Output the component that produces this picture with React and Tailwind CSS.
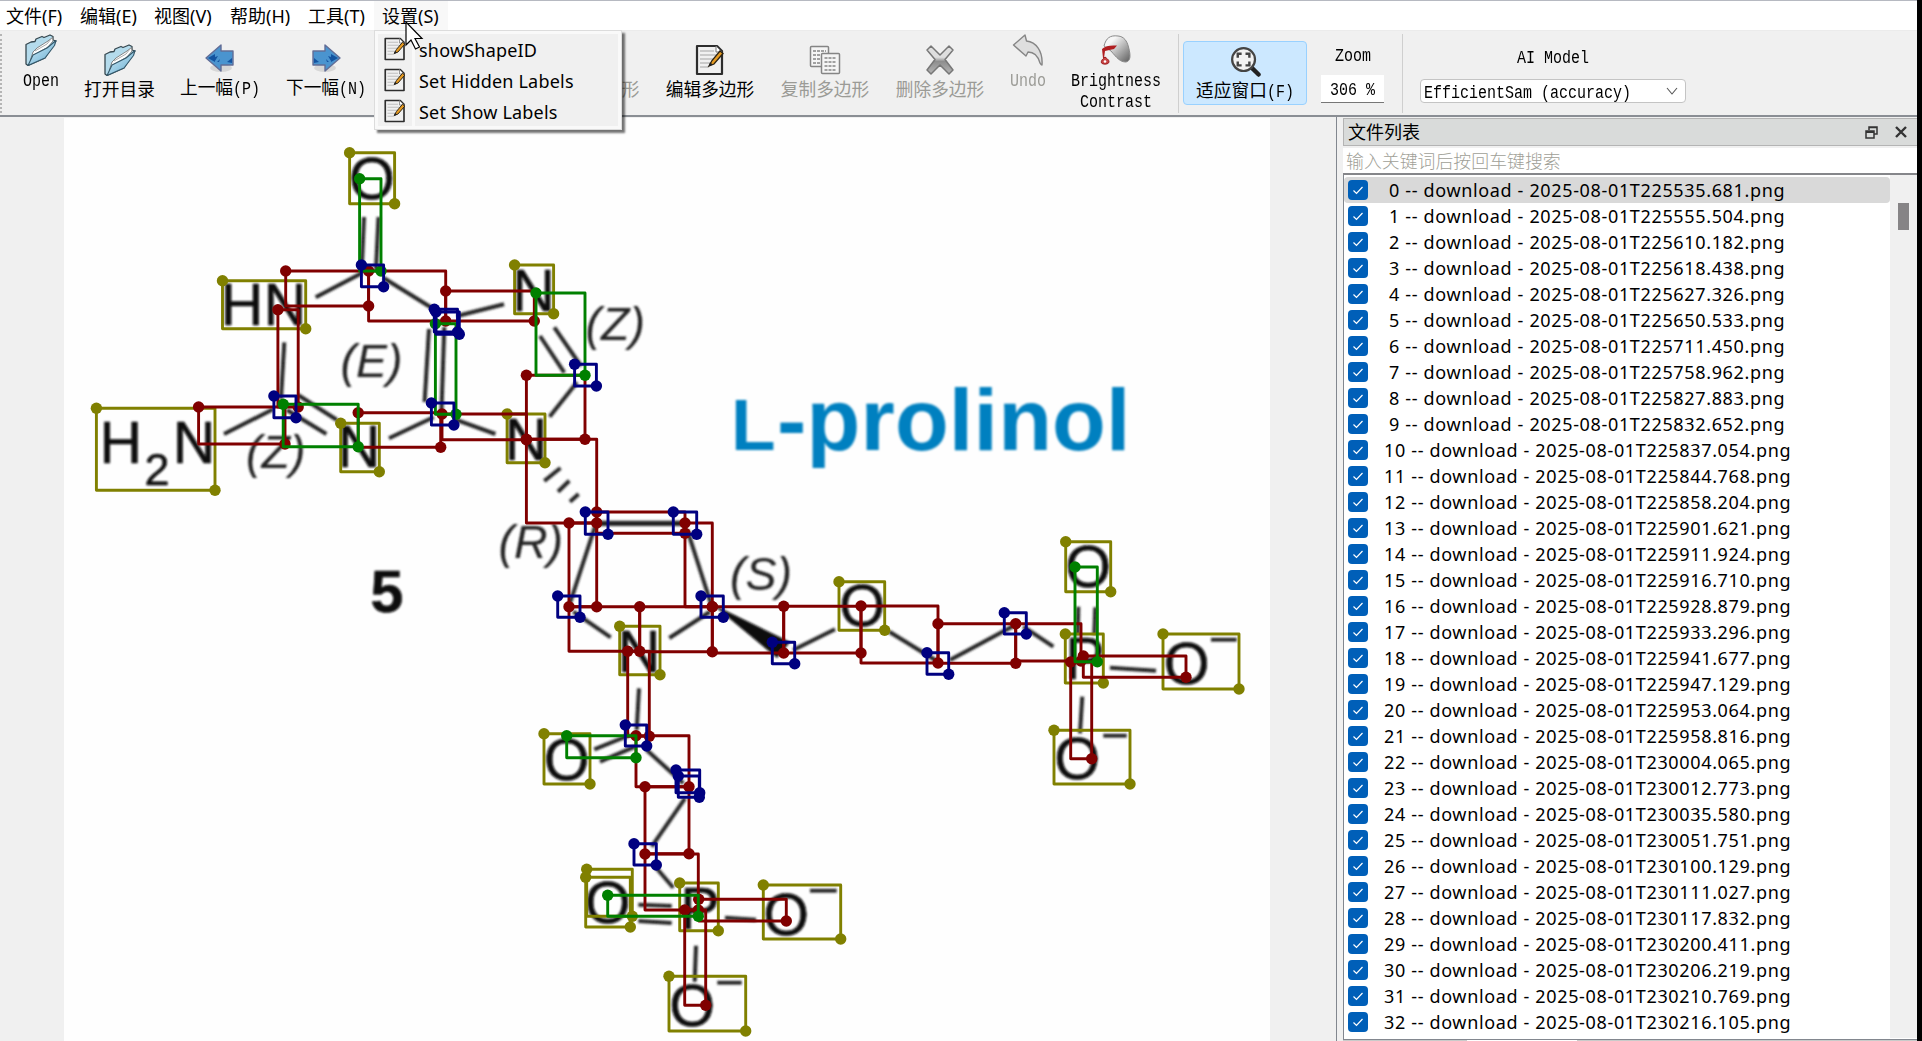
import React from "react";

const OLIVE = "#808000", NAVY = "#000080", GREEN = "#008000", RED = "#800000";

const shapes = [
  [OLIVE, [
    [349.6,152.7,394.6,203.7],[222.5,280.7,305.7,328.7],[514.6,265,553.6,313.7],[96.4,408.3,215,490.3],
    [340.7,423.3,379.3,471.7],[507.1,414,545,462.7],[619.7,626.3,660,674.7],[839,581.7,884.7,630.3],
    [1065.7,541.7,1110.7,591.7],[1065.3,634,1103.3,683],[1163,634,1239,689],[1054,730.3,1130,784],
    [544,733.7,590,784],[586.7,869.3,632.3,916.3],[585.7,877.3,630.3,927],[679.7,883,718.3,930.7],
    [763.3,885,840.7,939],[669,976.3,745.7,1031]]],
  [RED, [
    [285.7,271,368.6,306],[368.6,271,445.7,321],[445.7,291,534.3,321],[277.9,309.7,298.2,407],
    [198.6,407,285,444],[358.2,412.7,440.7,447.3],[442,414,526.4,439.7],[526.4,375.3,585,439.3],
    [526.4,439.3,596.7,523],[569,523,596.7,606.7],[596.7,512,685,533.3],[685,523,712.3,606.7],
    [569,606.7,639.7,651.3],[639.7,606.7,712.3,651.7],[712.3,606.7,783.7,653],[783.7,606.3,861,653],
    [861,606,938,663],[938,623.7,1015.7,663.3],[1015.7,623.7,1081,661],[1083.3,656,1186,677.3],
    [1070.7,662,1091.7,758.7],[627.7,651.3,649.3,736.3],[636,735.7,689,786.7],[645,786.7,689,853.7],
    [645,854,698.3,910],[698.7,899.3,786.3,921],[684.7,910,705.7,1005.3]]],
  [GREEN, [
    [359.6,178.7,381,271],[536,293,585,375.3],[435.4,323.7,456,414.3],[283.2,404.3,358.2,446.7],
    [566.7,735.7,636,757.7],[607.7,895.3,698.3,916.3],[1075,567,1097.3,661.7]]],
  [NAVY, [
    [361.4,265,383.6,286.7],[434.3,309.3,457.5,332],[436,312,459.3,334.3],[273.9,396,296,417.7],
    [431.4,403,453.9,425],[574.6,364.3,596.4,386],[585.3,512,608,534.3],[673.3,512,696.7,534.3],
    [557.7,596,580,617.3],[701,596,723.3,617.3],[772.3,642.3,794.7,663.7],[927,652.7,948.7,674.3],
    [1004.3,612.7,1026.3,634],[625.3,725,646.7,746],[676,770,699.7,792.7],[678.3,776,699.3,797.3],
    [634,843.7,656.3,865]]],
];

const bonds = [
  [364,217,362,263],[378.5,217,376,270],[315.7,297.3,362,273],[383.6,278,433.6,309],[457,316,504,304.3],
  [429,329,424.6,402],[444.3,327,441.4,413],[540,336,564.3,372.7],[554.3,327.3,581,366],[577,382.3,549.6,416.7],
  [284.3,342.3,281,399],[224,434,273,409.3],[298,395,337,420],[287,410,326.4,434],[389,438.3,433.6,417.3],
  [455,419.3,495.4,434],[544.3,481,560.4,468],[558,491.7,569.3,480.7],[570,501.7,578.6,494],
  [595,526.7,570,603],[687.3,530,711.7,606],[573.3,611.7,610.7,637.3],[710,611.7,669.3,638],
  [793.3,650,835,629.3],[889.3,631.7,938,661.7],[950,660,1013.3,626],[1023.3,626.7,1053.3,646.7],
  [1078.3,606.7,1077.7,635],[1095.3,607.3,1094.3,635],[1110,667.7,1156,670.7],[1082.3,696.7,1080,733.3],
  [639,688.3,636.7,730],[594.3,749.3,630,735],[600,761.7,635,746.7],[646.7,750,683.3,783.3],
  [685,798.3,651.7,846.7],[653,864,673.3,887.7],[638.3,904.7,671.7,906],[638.3,921,671.7,923],
  [725,917.7,756,919.7],[696,945.7,694.7,981.7],
];

const oxygens = [[372,178.5],[862.3,605.5],[1088.3,566.8],[1186.7,663.2],[1077.3,758.5],[566.7,759.5],[607.7,902.2],[786.3,914.2],[692.3,1005.8]];
const nitrogens = [[533.6,310.8],[359,467],[526,459.5],[639,671.5],[194,463]];
const charges = [[1211,639.7,1236.7],[1103.3,735.7,1126.7],[810,890.7,836.7],[717.3,982.7,741.7]];
const stereo = [["(E)",340.5,376.5],["(Z)",246,467.5],["(Z)",585.5,340],["(R)",498.5,558],["(S)",730,590]];

function Canvas() {
  return (
    <svg className="block h-[923px] w-[1206px] bg-[#fefefe]" viewBox="64 118 1206 923" fontFamily="'Liberation Sans', Arial, sans-serif">
      <defs><filter id="soft" x="-5%" y="-5%" width="110%" height="110%"><feGaussianBlur stdDeviation="1.05" /></filter></defs>
      <g filter="url(#soft)" fill="#0a0a0a">
        <g stroke="#262626" strokeWidth="4">
          {bonds.map(([a, b, c, d], i) => <line key={i} x1={a} y1={b} x2={c} y2={d} />)}
        </g>
        <line x1="597" y1="523.4" x2="685" y2="523.4" stroke="#222" strokeWidth="5.2" />
        <path d="M712 604 790 642 777 658Z" />
        <g stroke="#222" strokeWidth="3.8">
          {charges.map(([a, y, b], i) => <line key={i} x1={a} y1={y} x2={b} y2={y} />)}
        </g>
        <g fontSize="59" textAnchor="middle" stroke="#0a0a0a" strokeWidth="0.5">
          {oxygens.map(([x, y], i) => <text key={i} x={x} y={y + 20.5}>O</text>)}
          {nitrogens.map(([x, y], i) => <text key={i} x={x} y={y}>N</text>)}
          <text x="263.4" y="324.5">HN</text>
          <text x="120.7" y="462.5">H</text>
          <text x="157" y="484.5" fontSize="45">2</text>
          <text x="1085" y="679">P</text>
          <text x="700" y="928.5">P</text>
          <text x="387" y="611.5" fontWeight="bold">5</text>
        </g>
        <g fontSize="46.5" fontStyle="italic" fill="#222">
          {stereo.map(([t, x, y], i) => <text key={i} x={x} y={y}>{t}</text>)}
        </g>
        <g fill="#0080c0" fontWeight="bold" fontSize="88">
          <text x="731" y="450" fontSize="73">L</text>
          <text x="777" y="450" letterSpacing="0.2">-prolinol</text>
        </g>
      </g>
      {shapes.map(([color, list]) => (
        <g key={color} fill={color} stroke={color}>
          {list.map(([a, b, c, d], i) => (
            <g key={i}>
              <rect x={a} y={b} width={c - a} height={d - b} fill="none" strokeWidth="2.900" strokeLinejoin="round" />
              <circle cx={a} cy={b} r="5.700" stroke="none" />
              <circle cx={c} cy={d} r="5.700" stroke="none" />
            </g>
          ))}
        </g>
      ))}
    </svg>
  );
}

function FolderIcon() {
  return (
    <svg className="h-8 w-8" viewBox="0 0 32 32" strokeLinejoin="round">
      <defs><linearGradient id="folder" x1="0" y1="0" x2="1" y2="1"><stop offset="0" stopColor="#d8eff9" /><stop offset="1" stopColor="#62abd0" /></linearGradient></defs>
      <path d="M1 10.500 6 8l4-.5 1-2.500 6-2.500 2 1L25 1l3 1.500V6l3 1L20 24 3 31.500 1 30Z" fill="#b4dbec" stroke="#36474f" strokeWidth="1.300" />
      <path d="M5.500 26 8 18l4-4 11-7 4.500-3.500L28 7l-5 6-14 8Z" fill="#fff" stroke="#777" strokeWidth=".9" />
      <path d="m10 17 12-7 4-5" fill="none" stroke="#aaa" strokeWidth="1" />
      <path d="M3 31.500 8 21l14-7 9-7.500-1.500 5L20 24Z" fill="url(#folder)" stroke="#34586a" strokeWidth="1.100" />
    </svg>
  );
}

function ArrowIcon({ flip }) {
  return (
    <svg className={flip ? "h-8 w-8 -scale-x-100" : "h-8 w-8"} viewBox="0 0 32 32">
      <ellipse cx="17" cy="26" rx="11" ry="4" fill="#000" opacity=".1" />
      <path d="M2 16 17 3v6h12v14H17v6Z" fill="#4a94cf" stroke="#626d96" strokeWidth="1.400" strokeLinejoin="round" />
      <path d="M4 16 11 12v3l3-1-3 5v1ZM28 16l-5 4 5 1ZM16 17l-3 3 2 0Z" fill="#1353a0" />
    </svg>
  );
}

function EditIcon({ className }) {
  return (
    <svg className={className} viewBox="0 0 32 32">
      <path d="M3 2h20l5 5v23H3Z" fill="#f0f0f0" stroke="#2d2d2d" strokeWidth="2.200" strokeLinejoin="round" />
      <path d="M6 7h14M6 11h16M6 15h14M6 19h11M6 23h9" stroke="#bdbdbd" strokeWidth="1.300" />
      <path d="M22 2v6h6Z" fill="#fff" stroke="#777" />
      <path d="M15 22 18 16.500 26 7l3 2.500L20 20Z" fill="#e69b22" stroke="#2b2212" strokeWidth="1.300" />
      <path d="m14.500 22.500 1.500-4L19 20.500Z" fill="#222" />
    </svg>
  );
}

function CopyIcon() {
  return (
    <svg className="h-8 w-8" viewBox="0 0 32 32" fill="#f5f5f5" stroke="#858585" strokeWidth="1.500">
      <rect x="1.500" y="2.500" width="18" height="20" rx="1" />
      <path d="M4 7h13M4 11h13M4 15h13M4 19h13" strokeDasharray="3 1" />
      <rect x="12.500" y="9.500" width="18" height="20" rx="1" />
      <path d="M15.500 14h12M15.500 18h12M15.500 22h12M15.500 26h12" strokeDasharray="3 1" />
    </svg>
  );
}

function DeleteIcon() {
  return (
    <svg className="h-8 w-8" viewBox="0 0 32 32">
      <defs><linearGradient id="cross" x1="0" y1="0" x2="0" y2="1"><stop offset=".4" stopColor="#dedede" /><stop offset=".55" stopColor="#8e8e8e" /><stop offset="1" stopColor="#b5b5b5" /></linearGradient></defs>
      <path d="m3 6 4-4 9 9 9-9 4 4-8 9.500 8 10.500-4 4-9-9-9 9-4-4 8-10.500Z" fill="url(#cross)" stroke="#777" strokeWidth="1.500" strokeLinejoin="round" />
    </svg>
  );
}

function UndoIcon() {
  return (
    <svg className="h-8 w-8" viewBox="0 0 32 32">
      <path d="M1.500 11 13 1l1.500 6C24 8 31 17 30 31c-1.500 0-1-1-2-2-2-7-6-11-12-11l-2 4Z" fill="#dedede" stroke="#858585" strokeWidth="1.400" strokeLinejoin="round" />
    </svg>
  );
}

function BucketIcon() {
  return (
    <svg className="h-8 w-8" viewBox="0 0 32 32">
      <defs><linearGradient id="bucket" x1="0" y1="0" x2="1" y2="1"><stop offset=".25" stopColor="#f6f6f6" /><stop offset="1" stopColor="#5d5d5d" /></linearGradient></defs>
      <path d="M4 12C6 4 10 1 18 2c6 .5 9 5 10.500 11 2.500 9 2 14-2.500 15-6 0-9-4-15-11Z" fill="url(#bucket)" stroke="#8a8a8a" />
      <path d="M2 15c3-3 8-4 15-3.500l-3 3.500-9 2-1 7H3Z" fill="#b01e20" />
      <path d="M5 23c4 3 4.500 4 3.500 6-1 1.500-6 1.500-7 0-.5-2 0-3 3.500-6Z" fill="#c84444" stroke="#9a1719" />
      <circle cx="5" cy="27.500" r="1.300" fill="#fff" />
    </svg>
  );
}

function FitIcon() {
  return (
    <svg className="h-[31px] w-[31px]" viewBox="0 0 32 32">
      <path d="m21 21 8.500 8.500" stroke="#222" strokeWidth="4.500" strokeLinecap="round" />
      <circle cx="14" cy="14" r="11.800" fill="#f2f2f2" stroke="#444" strokeWidth="2.300" />
      <path d="M8 12V8h4M16 8h4v4M20 16v4h-4M12 20H8v-4" fill="none" stroke="#444" strokeWidth="2.500" />
    </svg>
  );
}

/* Half-width Latin text: each character takes 9px beside 18px CJK glyphs. */
function Half({ children, w }) {
  return (
    <span className={`inline-block whitespace-pre text-left ${w}`}>
      <span className="inline-block origin-left scale-x-[0.833] font-['Liberation_Mono',monospace] text-[18px]">{children}</span>
    </span>
  );
}

function Tool({ box, icon, children, dim }) {
  return (
    <div className={`flex shrink-0 flex-col items-center ${box} ${dim ? "text-[#9b9b96]" : "text-black"}`}>
      {icon}
      <div className="mt-0.5 whitespace-nowrap text-[17.700px] leading-[21px]">{children}</div>
    </div>
  );
}

const menus = [["文件(F)", "w-[74px]"], ["编辑(E)", "w-[74px]"], ["视图(V)", "w-[76px]"], ["帮助(H)", "w-[78px]"], ["工具(T)", "w-[66px]"]];
const times = ["225535.681","225555.504","225610.182","225618.438","225627.326","225650.533","225711.450","225758.962","225827.883","225832.652","225837.054","225844.768","225858.204","225901.621","225911.924","225916.710","225928.879","225933.296","225941.677","225947.129","225953.064","225958.816","230004.065","230012.773","230035.580","230051.751","230100.129","230111.027","230117.832","230200.411","230206.219","230210.769","230216.105"];

function SettingsMenu() {
  return (
    <div className="absolute left-[374px] top-[30px] z-10 flex h-[100px] w-[248px] flex-col border border-[#dcdcdc] bg-[#f9f9f9] p-[3px] shadow-[3px_3px_2px_rgba(0,0,0,0.55)]">
      {["showShapeID", "Set Hidden Labels", "Set Show Labels"].map((t) => (
        <div key={t} className="flex h-[31px] items-center gap-[3px]">
          <div className="flex h-full w-[34px] items-center justify-center bg-[#f0f0f0]"><EditIcon className="h-6 w-6" /></div>
          <div className="flex h-full flex-1 items-center bg-[#f0f0f0] pl-1 pt-0.5 text-[18px] leading-[22px] tracking-[0.2px]">{t}</div>
        </div>
      ))}
    </div>
  );
}

export default function App() {
  return (
    <div className="flex h-[1041px] w-[1922px] overflow-hidden bg-black font-['Noto_Sans','Noto_Sans_CJK_SC',sans-serif] text-black">
      <div className="relative flex w-[1917px] flex-col bg-[#f0f0f0]">
        <nav className="flex h-[31px] shrink-0 items-center border-b border-t border-b-[#ebebeb] border-t-[#b6b9c1] bg-white pl-1.5 text-[18px]">
          {menus.map(([t, w]) => <div key={t} className={`pt-0.5 ${w}`}>{t}</div>)}
          <div className="flex h-full w-[74px] items-center bg-[#f8f8f8] pl-2 pt-0.5">设置(S)</div>
        </nav>

        <div className="flex h-[86px] shrink-0 items-start border-b-2 border-b-[#8a8e94] font-['Noto_Sans_CJK_SC',sans-serif]">
          <div className="mt-[3px] h-[79px] w-0 border-l-2 border-dotted border-[#b5b5b5]" />
          <Tool box="w-[77px] pt-[3px]" icon={<FolderIcon />}><Half w="w-9">Open</Half></Tool>
          <Tool box="w-[81px] pt-[13px]" icon={<FolderIcon />}>打开目录</Tool>
          <Tool box="w-[120px] pt-[11px]" icon={<ArrowIcon />}>上一幅<Half w="w-[27px]">(P)</Half></Tool>
          <Tool box="w-[92px] pt-[11px]" icon={<ArrowIcon flip />}>下一幅<Half w="w-[27px]">(N)</Half></Tool>
          <Tool box="ml-[249px] w-[19px] pt-[45px]" dim>形</Tool>
          <Tool box="ml-[13px] w-[114px] pt-[13px]" icon={<EditIcon className="h-8 w-8" />}>编辑多边形</Tool>
          <Tool box="w-[116px] pt-[13px]" dim icon={<CopyIcon />}>复制多边形</Tool>
          <Tool box="w-[114px] pt-[13px]" dim icon={<DeleteIcon />}>删除多边形</Tool>
          <Tool box="w-[62px] pt-[3px]" dim icon={<UndoIcon />}><Half w="w-9">Undo</Half></Tool>
          <Tool box="w-[114px] pt-[3px]" icon={<BucketIcon />}>
            <div className="flex flex-col items-center">
              <div className="h-[21px]"><Half w="w-[90px]">Brightness</Half></div>
              <div className="h-[21px]"><Half w="w-[72px]">Contrast</Half></div>
            </div>
          </Tool>
          <div className="ml-[5px] mt-[3px] h-[79px] w-px bg-[#cfcfcf]" />
          <Tool box="ml-1 mt-2.5 h-16 w-[124px] rounded-sm border border-[#99d1ff] bg-[#cce8ff] pt-1" icon={<FitIcon />}>适应窗口<Half w="w-[27px]">(F)</Half></Tool>
          <div className="ml-3.5 flex w-[63px] flex-col items-center pt-2.5 text-[18px] leading-[24px]">
            <div className="h-6"><Half w="w-9">Zoom</Half></div>
            <div className="mt-2.5 h-7 w-[63px] border-b border-[#777] bg-white text-center"><Half w="w-[45px]">306 %</Half></div>
          </div>
          <div className="ml-[18px] mt-[3px] h-[79px] w-px bg-[#cfcfcf]" />
          <div className="ml-[17px] flex w-[266px] flex-col items-center pt-3 text-[18px] leading-[24px]">
            <div className="h-6"><Half w="w-[72px]">AI Model</Half></div>
            <div className="mt-3 flex h-6 w-full items-center justify-between rounded-sm border border-[#c4c4c4] bg-white pl-[3px] pr-[7px]">
              <div className="h-[22px] leading-[20px]"><Half w="w-[207px]">EfficientSam (accuracy)</Half></div>
              <svg className="h-3 w-3" viewBox="0 0 12 12"><path d="m1 3 5 6 5-6" fill="none" stroke="#555" strokeWidth="1.100" /></svg>
            </div>
          </div>
        </div>

        <div className="flex h-[924px]">
          <main className="flex w-[1337px] border-r border-r-[#82878f] pl-[64px] pt-px"><Canvas /></main>
          <aside className="ml-1.5 flex w-[574px] flex-col">
            <div className="mt-px flex h-7 shrink-0 items-center border border-r-0 border-[#b4b4b4] bg-[#d9dbda] pl-1 text-[18px]">
              <div className="flex-1">文件列表</div>
              <svg className="mr-[17px] h-[13px] w-[13px]" viewBox="0 0 13 13" fill="none" stroke="#333"><path d="M4 4V1h8v7H9M4 1.500h8" strokeWidth="1.500" /><rect x="1" y="5" width="8" height="7" strokeWidth="1.500" /><path d="M1 6h8" strokeWidth="2" /></svg>
              <svg className="mr-2.5 h-3 w-3" viewBox="0 0 12 12"><path d="m1 1 10 10M11 1 1 11" stroke="#333" strokeWidth="2.400" /></svg>
            </div>
            <div className="mt-0.5 flex h-[27px] shrink-0 items-center border-b-2 border-b-[#85868a] bg-white pb-0.5 pl-[3px] font-['Noto_Sans_CJK_SC',sans-serif] text-[17.900px] font-light leading-[22px] text-[#9f9f97]">输入关键词后按回车键搜索</div>
            <div className="flex h-[865px] shrink-0 border-b border-l border-[#82878f] bg-white">
              <div className="w-[546px] pt-0.5">
                {times.map((t, i) => (
                  <div key={t} className={`flex h-[26px] items-center rounded-sm pl-1 ${i === 0 ? "bg-[#d9d9d9]" : ""}`}>
                    <svg className="h-5 w-5 rounded-[4px] bg-[#005fb8]" viewBox="0 0 20 20"><path d="m5.500 10.500 3 3 6-6.500" fill="none" stroke="#fff" strokeWidth="1.200" /></svg>
                    <div className={`whitespace-pre text-[18px] leading-[24px] tracking-[0.65px] ${i < 10 ? "ml-[21px]" : "ml-4"}`}>{i} -- download - 2025-08-01T{t}.png</div>
                  </div>
                ))}
              </div>
              <div className="h-[863px] w-[27px] bg-[#f0f0f0] pl-2 pt-7"><div className="h-[27px] w-[11px] bg-[#868486]" /></div>
            </div>
            <div className="h-1 bg-[#c9cbca] pl-[124px]"><div className="h-1 w-[110px] bg-white" /></div>
          </aside>
        </div>

        <SettingsMenu />
        <svg className="absolute left-[405px] top-[21px] z-20 h-[30px] w-[20px]" viewBox="0 0 20 30"><path d="M1 1v23l5-5 4.500 9 4-2-4.500-8.500h7Z" fill="#fff" stroke="#000" strokeWidth="1.200" /></svg>
      </div>
    </div>
  );
}
